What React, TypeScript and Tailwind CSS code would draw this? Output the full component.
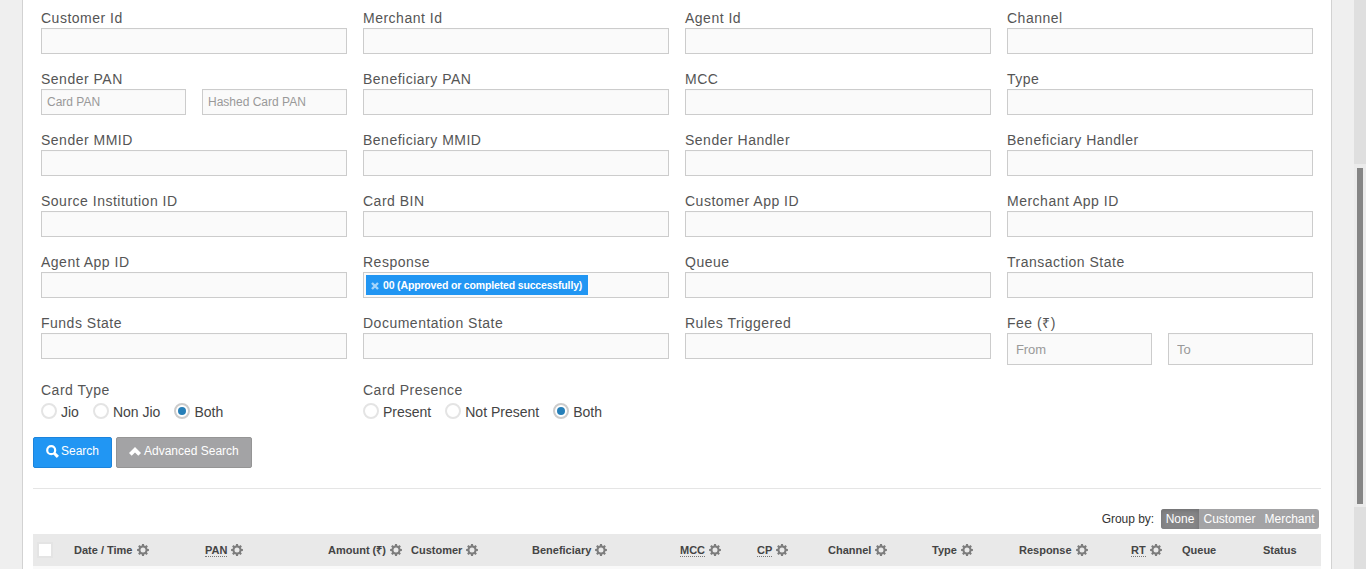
import type { ReactNode } from "react";

const GEAR_TEETH = [0, 45, 90, 135, 180, 225, 270, 315];

function Gear() {
  return (
    <svg viewBox="0 0 12 12" className="ml-1 size-3 shrink-0 text-[#7d7d7d]" fill="currentColor">
      {GEAR_TEETH.map((angle) => (
        <path key={angle} d="M4.7 2.4 5 0.1h2l.3 2.3z" transform={`rotate(${angle} 6 6)`} />
      ))}
      <circle cx="6" cy="6" r="3.5" fill="none" stroke="currentColor" strokeWidth="2" />
    </svg>
  );
}

function Input({ placeholder = "", tall = false }: { placeholder?: string; tall?: boolean }) {
  return (
    <input
      type="text"
      placeholder={placeholder}
      className={`block w-full min-w-0 flex-1 rounded-none border border-[#cccccc] bg-[#fafafa] shadow-[inset_0_1px_1px_rgba(0,0,0,0.015)] outline-none placeholder:text-[#999999] ${
        tall ? "h-8 px-2 text-[13px] tracking-[-0.1px]" : "h-[26px] px-[5px] pb-px text-xs"
      }`}
    />
  );
}

function Field({ label, children }: { label: string; children?: ReactNode }) {
  return (
    <div>
      <div className="h-5 text-sm leading-5 tracking-[0.5px] text-[#555555]">{label}</div>
      {children ?? <Input />}
    </div>
  );
}

function Radio({ label, checked = false }: { label: string; checked?: boolean }) {
  return (
    <label className="flex items-center gap-1">
      <span
        className={`flex size-4 items-center justify-center rounded-full border-2 bg-white ${
          checked ? "border-[#cccccc]" : "border-[#e4e4e4]"
        }`}
      >
        {checked && <span className="size-2 rounded-full bg-[#267fb8]" />}
      </span>
      <span className="relative top-px text-sm leading-4 text-[#444444]">{label}</span>
    </label>
  );
}

type Column = { name: string; width: string; gear?: boolean; abbr?: boolean };

const columns: Column[] = [
  { name: "Date / Time", width: "w-[131px]", gear: true },
  { name: "PAN", width: "w-[123px]", gear: true, abbr: true },
  { name: "Amount (₹)", width: "w-[83px]", gear: true },
  { name: "Customer", width: "w-[121px]", gear: true },
  { name: "Beneficiary", width: "w-[148px]", gear: true },
  { name: "MCC", width: "w-[77px]", gear: true, abbr: true },
  { name: "CP", width: "w-[71px]", gear: true, abbr: true },
  { name: "Channel", width: "w-[104px]", gear: true },
  { name: "Type", width: "w-[87px]", gear: true },
  { name: "Response", width: "w-[112px]", gear: true },
  { name: "RT", width: "w-[51px]", gear: true, abbr: true },
  { name: "Queue", width: "w-[81px]" },
  { name: "Status", width: "w-[58px]" },
];

export default function App() {
  return (
    <div className="flex h-[569px] w-[1366px] overflow-hidden bg-[#efefef] font-['Liberation_Sans',Arial,sans-serif]">
      <main className="ml-[22px] w-[1310px] shrink-0 border-x border-[#d2d2d2] bg-white px-2.5 pt-2">
        <div className="grid grid-cols-4 gap-x-4 gap-y-[15px] px-2">
          <Field label="Customer Id" />
          <Field label="Merchant Id" />
          <Field label="Agent Id" />
          <Field label="Channel" />
          <Field label="Sender PAN">
            <div className="flex gap-4">
              <Input placeholder="Card PAN" />
              <Input placeholder="Hashed Card PAN" />
            </div>
          </Field>
          <Field label="Beneficiary PAN" />
          <Field label="MCC" />
          <Field label="Type" />
          <Field label="Sender MMID" />
          <Field label="Beneficiary MMID" />
          <Field label="Sender Handler" />
          <Field label="Beneficiary Handler" />
          <Field label="Source Institution ID" />
          <Field label="Card BIN" />
          <Field label="Customer App ID" />
          <Field label="Merchant App ID" />
          <Field label="Agent App ID" />
          <Field label="Response">
            <div className="flex h-[26px] items-center border border-[#cccccc] bg-[#fafafa] px-0.5">
              <span className="flex h-5 w-[222px] items-center bg-[#2196f3] pt-0.5 pl-[5px] text-[10.5px] font-bold tracking-[-0.16px] whitespace-nowrap text-white">
                <svg viewBox="0 0 8 8" className="mr-1 size-2 shrink-0">
                  <path d="M1 1 7 7M7 1 1 7" stroke="#a6d5fa" strokeWidth="2.4" />
                </svg>
                00 (Approved or completed successfully)
              </span>
            </div>
          </Field>
          <Field label="Queue" />
          <Field label="Transaction State" />
          <Field label="Funds State" />
          <Field label="Documentation State" />
          <Field label="Rules Triggered" />
          <Field label="Fee (₹)">
            <div className="flex gap-4">
              <Input placeholder="From" tall />
              <Input placeholder="To" tall />
            </div>
          </Field>
          <Field label="Card Type">
            <div className="mt-[3px] flex gap-3.5">
              <Radio label="Jio" />
              <Radio label="Non Jio" />
              <Radio label="Both" checked />
            </div>
          </Field>
          <Field label="Card Presence">
            <div className="mt-[3px] flex gap-3.5">
              <Radio label="Present" />
              <Radio label="Not Present" />
              <Radio label="Both" checked />
            </div>
          </Field>
        </div>

        <div className="mt-[18px] flex gap-1 text-xs text-white">
          <button className="flex h-[31px] w-[79px] items-center rounded-[2px] border border-[#1c84dc] bg-[#2196f3] pb-[3px] pl-3">
            <svg viewBox="0 0 13 13" className="mr-0.5 size-[13px] shrink-0" fill="none" stroke="currentColor">
              <circle cx="5.2" cy="5.2" r="4" strokeWidth="2.2" />
              <path d="m8.2 8.2 3.7 3.7" strokeWidth="3" />
            </svg>
            Search
          </button>
          <button className="flex h-[31px] w-[136px] items-center rounded-[2px] border border-[#959595] bg-[#a3a3a5] pb-[3px] pl-3">
            <svg viewBox="0 0 12 9" className="mr-[3px] h-[9px] w-3 shrink-0" fill="currentColor">
              <path d="M6 0 12 6 9.3 8.7 6 5.5 2.7 8.7 0 6z" />
            </svg>
            Advanced Search
          </button>
        </div>

        <hr className="mt-5 border-[#e5e5e5]" />

        <div className="mt-5 flex h-5 items-center justify-end pr-0.5 text-xs text-[#333333]">
          <span className="mr-[7px] tracking-[-0.05px]">Group by:</span>
          <div className="flex h-5 overflow-hidden rounded-[3px] bg-[#a3a3a5] leading-5 text-white">
            <span className="w-[38px] bg-[#858587] text-center shadow-[inset_0_2px_4px_rgba(0,0,0,0.15)]">None</span>
            <span className="w-[61px] text-center">Customer</span>
            <span className="w-[59px] text-center">Merchant</span>
          </div>
        </div>

        <div className="mt-[5px] flex h-8 items-center bg-[#e9e9e9] text-[11px] font-bold whitespace-nowrap text-[#444444]">
          <span className="mr-[21px] ml-1 size-4 shrink-0 border-2 border-[#e4e4e4] bg-white" />
          {columns.map((column) => (
            <div key={column.name} className={`flex shrink-0 items-center ${column.width}`}>
              <span className={column.abbr ? "-mb-px border-b border-dotted border-[#777777] leading-3" : "leading-[13px]"}>
                {column.name}
              </span>
              {column.gear && <Gear />}
            </div>
          ))}
        </div>
        <div className="h-[3px] bg-[#f9f9f9]" />
      </main>

      <div className="ml-auto flex w-3 flex-col bg-[#ebebeb]">
        <div className="h-[164px] bg-[#dfdfdf]" />
        <div className="mx-[3px] mt-1 h-[336px] bg-[#858585]" />
        <div className="mt-[3px] flex-1 bg-[#dfdfdf]" />
      </div>
    </div>
  );
}
